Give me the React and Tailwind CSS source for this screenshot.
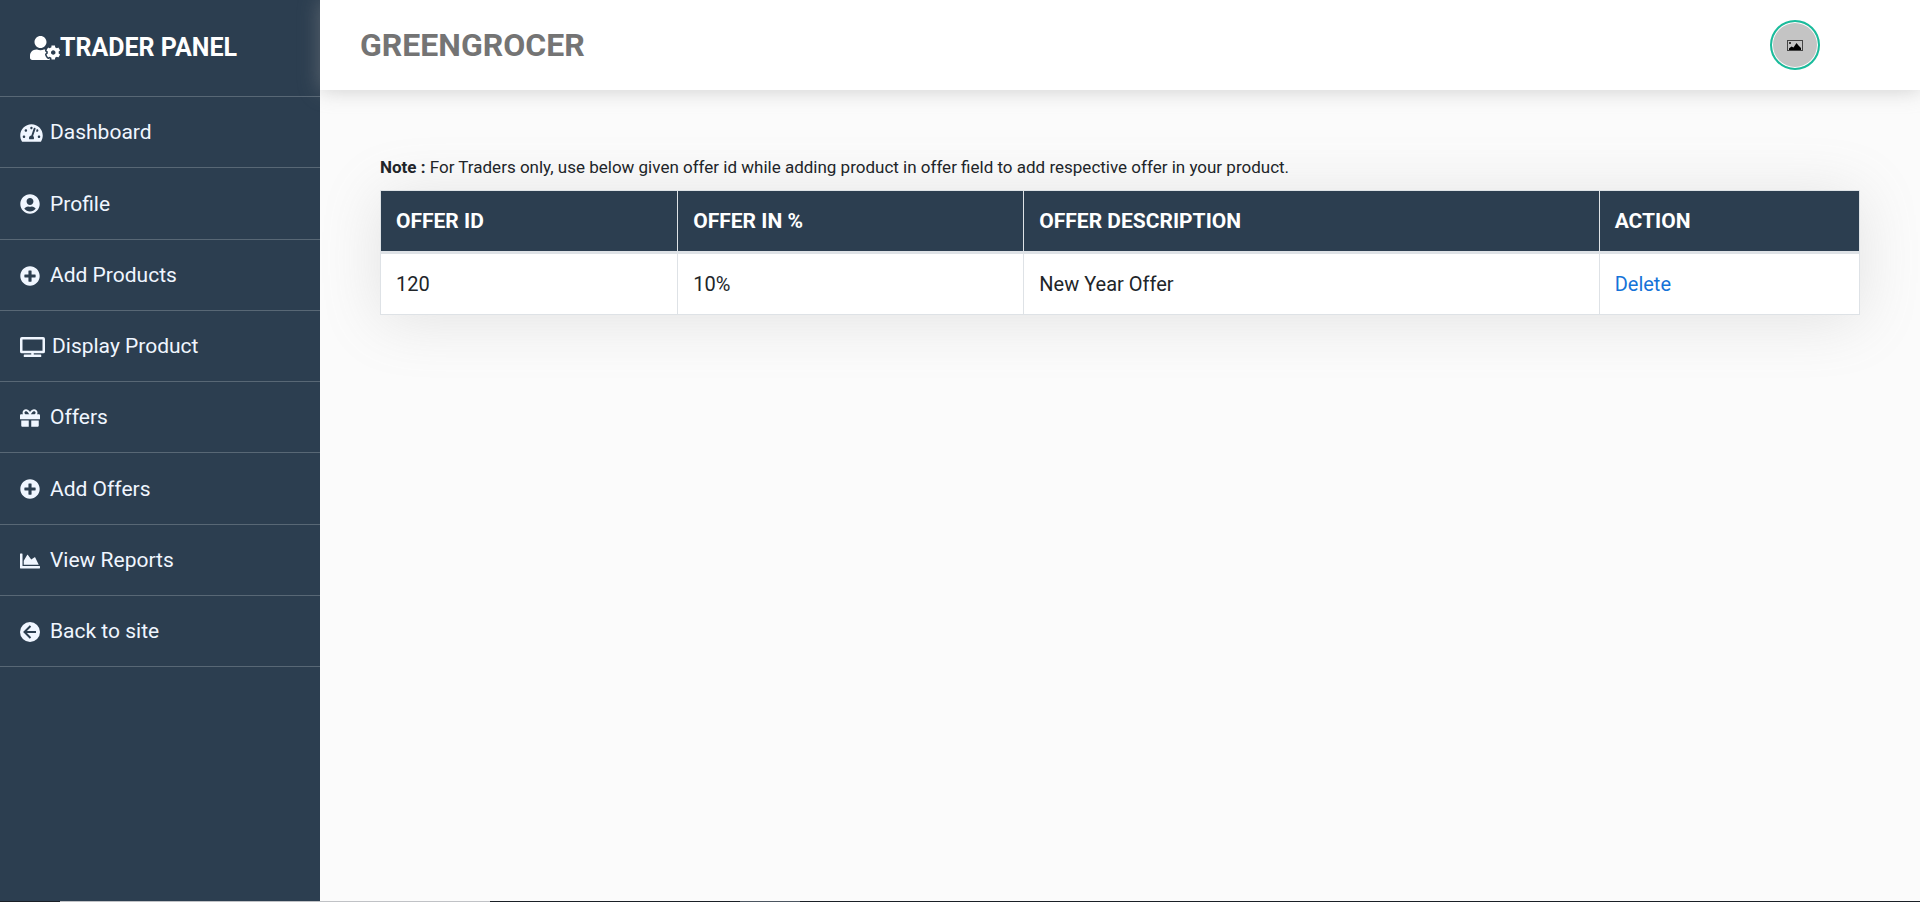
import { FaUserCog, FaTachometerAlt, FaUserCircle, FaPlusCircle, FaTv, FaGift, FaChartArea } from "react-icons/fa";

function BackIcon({ className }) {
  return (
    <svg viewBox="0 0 20 20" className={className} aria-hidden="true">
      <circle cx="10" cy="10" r="10" fill="currentColor" />
      <path d="M10.500 4 4.500 10l6 6M4.800 10H16" fill="none" stroke="#2c3e50" strokeWidth="2" />
    </svg>
  );
}

const links = [
  { label: "Dashboard", Icon: FaTachometerAlt, size: "w-[23px]", gap: "gap-[7px]" },
  { label: "Profile", Icon: FaUserCircle, size: "w-5", gap: "gap-2.5" },
  { label: "Add Products", Icon: FaPlusCircle, size: "w-5", gap: "gap-2.5" },
  { label: "Display Product", Icon: FaTv, size: "w-[25px]", gap: "gap-[7px]" },
  { label: "Offers", Icon: FaGift, size: "w-5", gap: "gap-2.5" },
  { label: "Add Offers", Icon: FaPlusCircle, size: "w-5", gap: "gap-2.5" },
  { label: "View Reports", Icon: FaChartArea, size: "w-5", gap: "gap-2.5" },
  { label: "Back to site", Icon: BackIcon, size: "w-5", gap: "gap-2.5" },
];

function Sidebar() {
  return (
    <aside className="w-80 shrink-0 bg-[#2c3e50] text-white">
      <h1 className="flex h-24 items-center pl-[30px] text-[25px] font-bold">
        <FaUserCog className="h-6 w-[30px] shrink-0" />
        TRADER PANEL
      </h1>
      <nav className="grid h-[571px] grid-rows-8 border-t border-[#586775]">
        {links.map(({ label, Icon, size, gap }) => (
          <a key={label} href="#" className={`flex items-center border-b border-[#586775] px-5 pt-0.5 text-[21px] text-[#f0f6ff] ${gap}`}>
            <Icon className={`h-5 shrink-0 ${size}`} />
            {label}
          </a>
        ))}
      </nav>
    </aside>
  );
}

function Avatar() {
  return (
    <button aria-label="Account" className="flex size-[50px] items-center justify-center rounded-full border-2 border-[#1abc9c] bg-[#c4c4c4] ring-1 ring-white ring-inset">
      <svg viewBox="0 0 16 11" className="h-[11px] w-4" aria-hidden="true">
        <rect x="0.5" y="0.5" width="15" height="10" fill="none" stroke="#444" />
        <circle cx="3" cy="3" r="1" fill="#111" />
        <path d="M2 10V8.500L4.500 6.500 6.500 7.500 9.500 3l2 2.500L14 8v2z" fill="#000" />
      </svg>
    </button>
  );
}

function OffersTable() {
  return (
    <table className="w-full border-collapse border border-[#dee2e6] bg-white text-left text-xl shadow-[0_5px_60px_rgba(128,128,128,0.2)]">
      <thead>
        <tr className="h-[62px] bg-[#2c3e50] text-[21px] text-white">
          <th className="w-[20.1%] border border-b-3 border-[#dee2e6] px-[15px] pt-0.5 font-bold">OFFER ID</th>
          <th className="w-[23.4%] border border-b-3 border-[#dee2e6] px-[15px] pt-0.5 font-bold">OFFER IN %</th>
          <th className="w-[38.9%] border border-b-3 border-[#dee2e6] px-[15px] pt-0.5 font-bold">OFFER DESCRIPTION</th>
          <th className="border border-b-3 border-[#dee2e6] px-[15px] pt-0.5 font-bold">ACTION</th>
        </tr>
      </thead>
      <tbody>
        <tr className="h-[62px] text-[#212529]">
          <td className="border border-[#dee2e6] px-[15px]">120</td>
          <td className="border border-[#dee2e6] px-[15px]">10%</td>
          <td className="border border-[#dee2e6] px-[15px]">New Year Offer</td>
          <td className="border border-[#dee2e6] px-[15px]"><a href="#" className="text-[#1573d8]">Delete</a></td>
        </tr>
      </tbody>
    </table>
  );
}

function BottomEdge() {
  return (
    <div className="flex h-px bg-[#1a1f26]">
      <div className="w-[60px]" />
      <div className="w-[430px] bg-[#c0c2c6]" />
      <div className="w-[250px]" />
      <div className="w-[60px] bg-[#4b5560]" />
    </div>
  );
}

export default function App() {
  return (
    <div className="flex min-h-screen flex-col bg-[#fbfbfb] font-['Roboto',sans-serif]">
      <div className="flex grow">
        <Sidebar />
        <div className="min-w-0 grow">
          <header className="flex h-[90px] items-center justify-between bg-white pr-[100px] pl-10 shadow-[0_0_20px_rgba(150,150,150,0.45)]">
            <h2 className="text-[32px] font-bold text-[#747474]">GREENGROCER</h2>
            <Avatar />
          </header>
          <main className="px-[60px] pt-16">
            <p className="mb-2.5 text-[17px] leading-[26px] text-[#212529]"><b>Note :</b> For Traders only, use below given offer id while adding product in offer field to add respective offer in your product.</p>
            <OffersTable />
          </main>
        </div>
      </div>
      <BottomEdge />
    </div>
  );
}
